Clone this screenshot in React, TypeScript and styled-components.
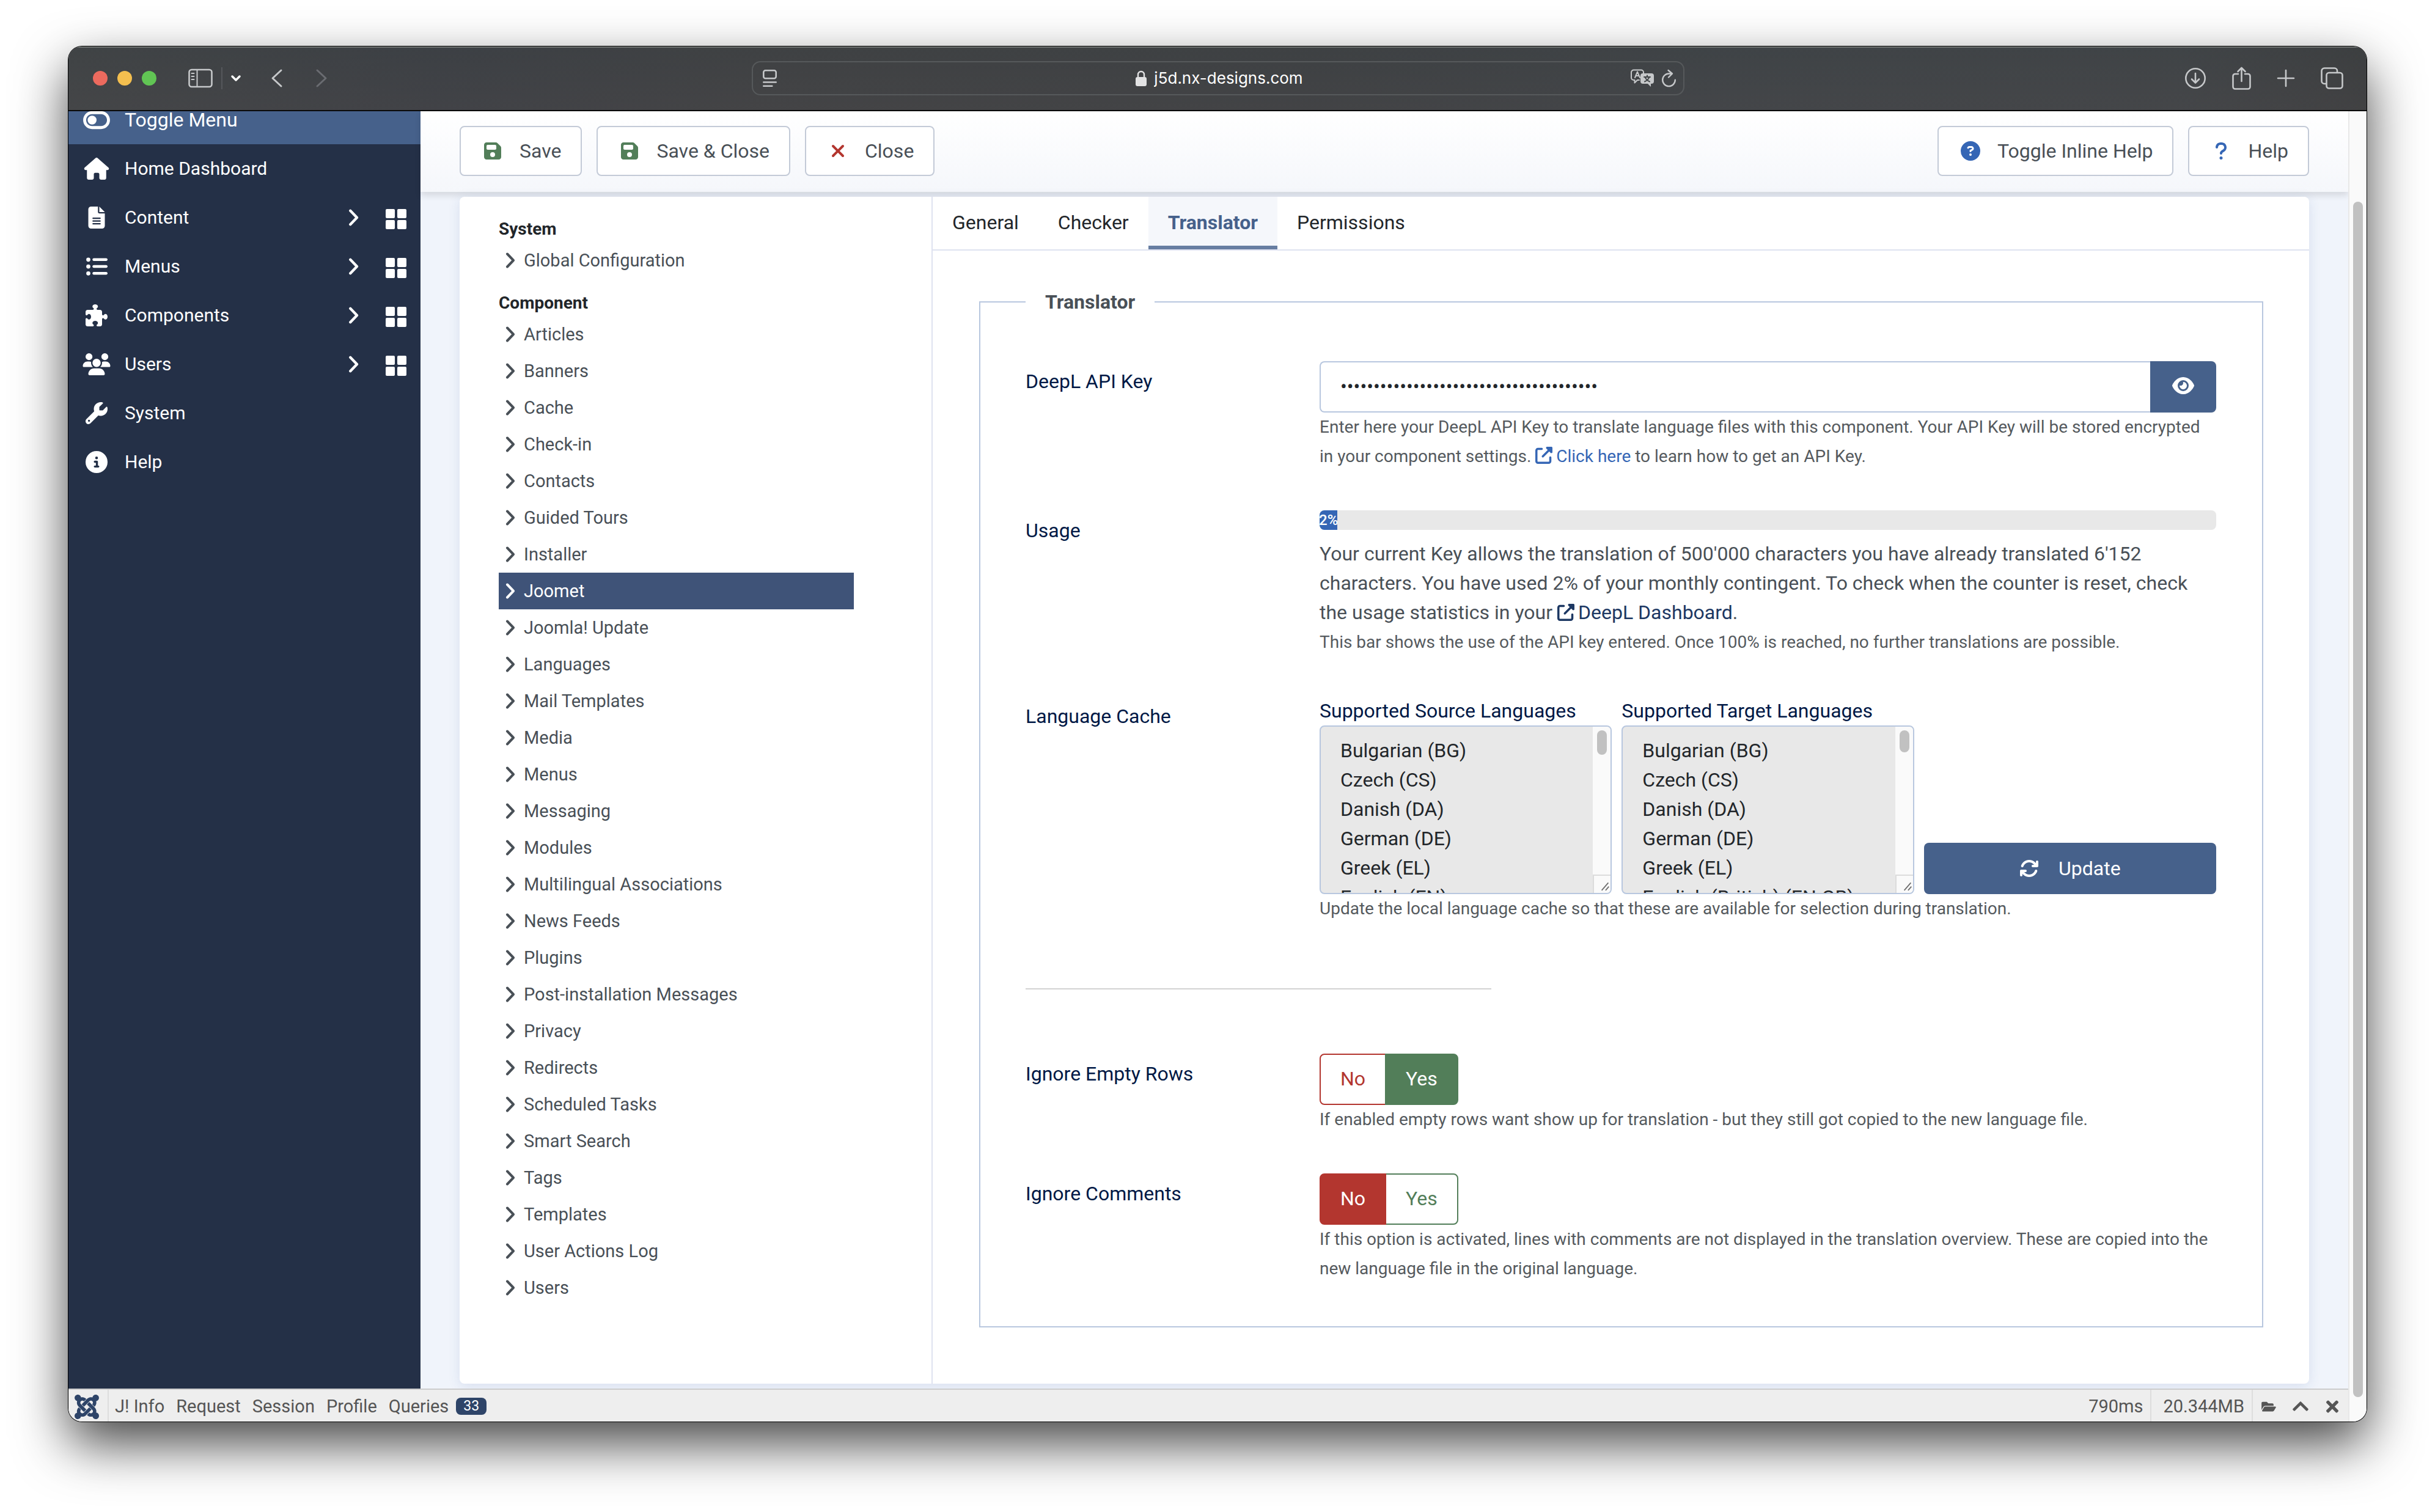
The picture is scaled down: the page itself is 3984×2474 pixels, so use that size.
import React, { useState } from 'react';
import styled, { createGlobalStyle, css } from 'styled-components';
import {
  FaToggleOff,
  FaHouse,
  FaFileLines,
  FaListUl,
  FaPuzzlePiece,
  FaUsers,
  FaWrench,
  FaCircleInfo,
  FaFloppyDisk,
  FaXmark,
  FaCircleQuestion,
  FaQuestion,
  FaEye,
  FaUpRightFromSquare,
  FaArrowsRotate,
} from 'react-icons/fa6';
import { FaFolderOpen, FaChevronUp, FaTimes, FaJoomla } from 'react-icons/fa';

const color = {
  navy: '#243047',
  blue: '#46618b',
  active: '#3f5378',
  link: '#3566b5',
  deep: '#001845',
  text: '#495057',
  ink: '#22262a',
  muted: '#555a5e',
  line: '#b8c7df',
  rule: '#dee2f0',
  page: '#f0f4fb',
  green: '#527e59',
  red: '#b3362f',
  badge: '#2e4468',
};

const GlobalStyle = createGlobalStyle`
  *, *::before, *::after { box-sizing: border-box; }
  body {
    margin: 0;
    background: #fff;
    color: ${color.text};
    font-family: Roboto, "Noto Sans", sans-serif;
    font-size: 32px;
    line-height: 48px;
  }
  button, input, select { font: inherit; color: inherit; margin: 0; }
  button { cursor: pointer; }
  a { text-decoration: none; color: inherit; }
  ul { list-style: none; margin: 0; padding: 0; }
`;

const Desktop = styled.div`
  min-height: 100vh;
  padding: 76px 112px 148px;
  display: flex;
  background: #fff;
`;

const Window = styled.div`
  flex: 1;
  min-width: 0;
  display: flex;
  flex-direction: column;
  border-radius: 22px;
  overflow: hidden;
  background: ${color.page};
  box-shadow: 0 0 0 1px #000, 0 36px 86px rgba(0, 0, 0, 0.73);
`;

/* ---------- browser chrome ---------- */

const TitleBar = styled.header`
  display: grid;
  grid-template-columns: 1fr minmax(0, 1526px) 1fr;
  align-items: center;
  height: 106px;
  padding: 0 38px 0 40px;
  border-bottom: 2px solid #0a0a0a;
  background: linear-gradient(180deg, rgba(62, 66, 68, 0.6), rgba(70, 70, 72, 0.6)),
    linear-gradient(90deg, #424547 0%, #3a3d45 16%, #404042 30%, #3d3f42 55%, #40454a 72%, #42464a 92%, #3a3a3b 100%);
  box-shadow: inset 0 2px 0 #707472;
  color: #c6c8ca;
`;

const ChromeGroup = styled.div<{ $gap: number; $end?: boolean }>`
  display: flex;
  align-items: center;
  gap: ${(p) => p.$gap}px;
  justify-content: ${(p) => (p.$end ? 'flex-end' : 'flex-start')};
`;

const Light = styled.button<{ $tint: string }>`
  width: 24px;
  height: 24px;
  padding: 0;
  border: 0;
  border-radius: 50%;
  background: ${(p) => p.$tint};
`;

const ChromeButton = styled.button<{ $dim?: boolean }>`
  display: flex;
  padding: 0;
  border: 0;
  background: none;
  color: ${(p) => (p.$dim ? '#6a6c71' : 'inherit')};
  svg {
    display: block;
    overflow: visible;
    fill: none;
    stroke: currentColor;
    stroke-width: 2.6;
    stroke-linecap: round;
    stroke-linejoin: round;
  }
`;

const ChromeDivider = styled.span`
  width: 2px;
  height: 36px;
  background: #55575b;
`;

const NavGroup = styled(ChromeGroup)`
  padding-left: 36px;
`;

const HistoryGroup = styled(ChromeGroup)`
  padding-left: 34px;
`;

const AddressBar = styled.div`
  display: grid;
  grid-template-columns: 1fr auto 1fr;
  align-items: center;
  height: 56px;
  padding: 0 12px 0 16px;
  border: 2px solid #56595b;
  border-radius: 14px;
`;

const AddressLabel = styled.label`
  display: flex;
  align-items: center;
  gap: 12px;
  color: #e2e2e3;
`;

const AddressInput = styled.input`
  field-sizing: content;
  padding: 0;
  border: 0;
  outline: 0;
  background: none;
  color: #fff;
  font-family: Inter, Roboto, sans-serif;
  font-size: 26px;
  line-height: 32px;
`;

/* ---------- page frame ---------- */

const Viewport = styled.div`
  flex: 1;
  min-height: 0;
  display: flex;
`;

const Page = styled.div`
  flex: 1;
  min-width: 0;
  display: flex;
  flex-direction: column;
`;

const PageBody = styled.div`
  flex: 1;
  display: flex;
`;

const ScrollTrack = styled.div`
  display: flex;
  width: 30px;
  padding: 148px 6px 40px;
  border-left: 2px solid #e8e8e8;
  background: #fafafa;
`;

const ScrollThumb = styled.div`
  flex: 1;
  border-radius: 8px;
  background: #c1c1c1;
`;

/* ---------- main menu ---------- */

const Sidebar = styled.nav`
  flex: none;
  width: 576px;
  overflow: hidden;
  background: ${color.navy};
  color: #fff;
`;

/* The menu is scrolled down by a third of its first row. */
const MenuList = styled.ul`
  margin-top: -26px;
`;

const MenuRow = styled.li<{ $toggle?: boolean }>`
  display: flex;
  align-items: center;
  height: 80px;
  padding: 0 23px 0 22px;
  background: ${(p) => (p.$toggle ? color.blue : 'transparent')};
  font-size: ${(p) => (p.$toggle ? 32 : 30)}px;
`;

const MenuLink = styled.a`
  flex: 1;
  display: flex;
  align-items: center;
  gap: 22px;
`;

const MenuIcon = styled.span<{ $size: number }>`
  display: flex;
  svg {
    display: block;
    width: 48px;
    height: ${(p) => p.$size}px;
  }
`;

const MenuAction = styled.button`
  display: flex;
  padding: 0;
  border: 0;
  background: none;
  & + & {
    margin-left: 44px;
  }
`;

/* ---------- toolbar ---------- */

const Main = styled.main`
  flex: 1;
  min-width: 0;
  display: flex;
  flex-direction: column;
`;

const Toolbar = styled.div`
  display: flex;
  justify-content: space-between;
  padding: 24px 64px 26px;
  background: linear-gradient(#fff, #f5f7fb);
  box-shadow: 0 6px 10px rgba(0, 0, 0, 0.11);
`;

const ToolGroup = styled.div`
  display: flex;
  gap: 24px;
`;

const ToolButton = styled.button<{ $tint: string }>`
  display: flex;
  align-items: center;
  gap: 24px;
  height: 82px;
  padding: 0 32px;
  border: 2px solid #c3cad7;
  border-radius: 8px;
  background: #fff;
  color: ${color.text};
  svg {
    width: 40px;
    height: 32px;
    color: ${(p) => p.$tint};
  }
`;

/* ---------- options card ---------- */

const Card = styled.section`
  flex: 1;
  display: flex;
  margin: 8px 64px;
  border-radius: 8px;
  background: #fff;
  box-shadow: 0 4px 20px rgba(40, 70, 150, 0.12);
`;

const Aside = styled.aside`
  flex: none;
  width: 774px;
  padding: 32px 127px 32px 64px;
  border-right: 2px solid ${color.rule};
`;

const AsideHeading = styled.h2`
  margin: 0;
  font-size: 28px;
  line-height: 42px;
  font-weight: 700;
  color: ${color.ink};
`;

const AsideList = styled.ul`
  margin-bottom: 19px;
`;

const AsideLink = styled.a<{ $active: boolean }>`
  display: flex;
  align-items: center;
  gap: 14px;
  height: 60px;
  padding-left: 11px;
  font-size: 29px;
  color: ${(p) => (p.$active ? '#fff' : color.text)};
  background: ${(p) => (p.$active ? color.active : 'transparent')};
`;

const Panel = styled.div`
  flex: 1;
  min-width: 0;
`;

const TabBar = styled.div`
  display: flex;
  border-bottom: 2px solid ${color.rule};
`;

const Tab = styled.button<{ $active: boolean }>`
  height: 86px;
  padding: 4px 32px 0;
  border: 0;
  border-bottom: 6px solid ${(p) => (p.$active ? '#677ea2' : 'transparent')};
  background: ${(p) => (p.$active ? '#f5f7fb' : 'transparent')};
  color: ${(p) => (p.$active ? color.blue : color.ink)};
  font-weight: ${(p) => (p.$active ? 700 : 400)};
`;

const TabBody = styled.div`
  padding: 60px 75px 60px 76px;
`;

const Fieldset = styled.fieldset`
  display: block;
  min-width: 0;
  margin: 0;
  padding: 73px 75px 70px 74px;
  border: 2px solid ${color.line};
`;

const Legend = styled.legend`
  padding: 0 32px;
  font-weight: 700;
`;

const Fields = styled.div`
  display: flex;
  flex-direction: column;
  gap: 64px;
`;

const FieldRow = styled.div`
  display: grid;
  grid-template-columns: 481px minmax(0, 1fr);
`;

const labelText = css`
  color: ${color.deep};
`;

const FieldLabel = styled.label`
  ${labelText}
  padding-top: 9px;
`;

const FieldTitle = styled.span`
  ${labelText}
  padding-top: 9px;
`;

const Hint = styled.p`
  margin: 0;
  font-size: 28px;
  color: ${color.muted};
`;

const TextLink = styled.a<{ $dark?: boolean }>`
  color: ${(p) => (p.$dark ? '#1d3863' : color.link)};
  svg {
    width: 28px;
    height: 28px;
    margin-right: 6px;
    vertical-align: -3px;
  }
`;

const KeyGroup = styled.div`
  display: flex;
  height: 84px;
`;

const KeyInput = styled.input`
  flex: 1;
  min-width: 0;
  padding: 0 32px 3px;
  border: 2px solid ${color.line};
  border-right: 0;
  border-radius: 8px 0 0 8px;
  outline: 0;
  background: #fff;
  color: ${color.ink};
`;

const EyeButton = styled.button`
  display: flex;
  align-items: center;
  justify-content: center;
  width: 108px;
  padding: 0 0 4px;
  border: 0;
  border-radius: 0 8px 8px 0;
  background: ${color.blue};
  color: #fff;
  svg {
    width: 36px;
    height: 32px;
  }
`;

const Progress = styled.div`
  display: flex;
  height: 32px;
  margin-bottom: 15px;
  overflow: hidden;
  border-radius: 8px;
  background: #e8e8e8;
`;

const ProgressFill = styled.div`
  display: flex;
  align-items: center;
  justify-content: center;
  overflow: hidden;
  background: ${color.link};
  color: #fff;
  font-size: 24px;
  font-weight: 500;
  line-height: 32px;
`;

const Paragraph = styled.p`
  margin: 0 0 1px;
`;

const LanguageGrid = styled.div`
  display: grid;
  grid-template-columns: repeat(3, minmax(0, 1fr));
  gap: 16px;
  align-items: end;
`;

const ListLabel = styled.label`
  ${labelText}
  display: block;
`;

const ListFrame = styled.div`
  display: flex;
  height: 276px;
  border: 2px solid ${color.line};
  border-radius: 8px;
  overflow: hidden;
  background: #e8e8e8;
`;

const LanguageSelect = styled.select`
  flex: 1;
  min-width: 0;
  height: 272px;
  padding: 20px 0 0;
  border: 0;
  outline: 0;
  border-radius: 0;
  background: transparent;
  color: ${color.ink};
  overflow-y: scroll;
  scrollbar-width: none;
  option {
    height: 48px;
    min-height: 48px;
    padding: 0 32px;
    line-height: 48px;
  }
`;

const ListTrack = styled.div`
  flex: none;
  display: flex;
  flex-direction: column;
  justify-content: space-between;
  width: 29px;
  background: #fafafa;
`;

const ListThumb = styled.div<{ $length: number }>`
  width: 16px;
  height: ${(p) => p.$length}px;
  margin: 6px 7px;
  border-radius: 8px;
  background: #c1c1c1;
`;

const ResizeGrip = styled.svg`
  display: block;
  width: 29px;
  height: 30px;
  border-top: 2px solid #dcdcdc;
  border-left: 2px solid #dcdcdc;
  fill: none;
  stroke: #6f6f6f;
  stroke-width: 2;
`;

const UpdateButton = styled.button`
  display: flex;
  align-items: center;
  justify-content: center;
  gap: 32px;
  height: 84px;
  border: 0;
  border-radius: 8px;
  background: ${color.blue};
  color: #fff;
  svg {
    width: 32px;
    height: 32px;
  }
`;

const Rule = styled.hr`
  width: 762px;
  height: 2px;
  margin: 42px 0 41px;
  border: 0;
  background: #d3d3d3;
`;

const SwitchGroup = styled.div`
  display: flex;
`;

const SwitchOption = styled.label<{ $tint: string }>`
  position: relative;
  display: flex;
  align-items: center;
  height: 84px;
  padding: 0 32px 2px;
  border: 2px solid ${(p) => p.$tint};
  background: #fff;
  color: ${(p) => p.$tint};
  cursor: pointer;
  &:first-child {
    border-radius: 8px 0 0 8px;
  }
  &:last-child {
    margin-left: -2px;
    border-radius: 0 8px 8px 0;
  }
  &:has(input:checked) {
    z-index: 1;
    background: ${(p) => p.$tint};
    color: #fff;
  }
  input {
    position: absolute;
    inset: 0;
    opacity: 0;
  }
`;

/* ---------- debug bar ---------- */

const DebugBar = styled.footer`
  display: flex;
  justify-content: space-between;
  height: 54px;
  border-top: 2px solid #ccc;
  background: #eee;
  color: #555;
  font-size: 29px;
`;

const DebugGroup = styled.div`
  display: flex;
`;

const DebugLogo = styled.a`
  display: flex;
  align-items: center;
  width: 66px;
  padding: 4px 0 0 10px;
  border-right: 2px solid #ddd;
  color: ${color.badge};
  svg {
    width: 40px;
    height: 46px;
  }
`;

const DebugLink = styled.a`
  display: flex;
  align-items: center;
  gap: 12px;
  padding: 2px 0 0 10px;
  margin-right: 9px;
`;

const Badge = styled.span`
  padding: 0 12px;
  border-radius: 8px;
  background: ${color.badge};
  color: #fff;
  font-size: 23px;
  line-height: 28px;
`;

const DebugStat = styled.span`
  display: flex;
  align-items: center;
  padding: 2px 12px 0 19px;
  border-right: 2px solid #ddd;
`;

const DebugButton = styled.button<{ $size: number }>`
  display: flex;
  align-items: center;
  justify-content: center;
  width: 52px;
  padding: 2px 0 0;
  border: 0;
  background: none;
  svg {
    width: 30px;
    height: ${(p) => p.$size}px;
  }
`;

/* ---------- data ---------- */

const menu = [
  { label: 'Home Dashboard', icon: FaHouse },
  { label: 'Content', icon: FaFileLines, nested: true },
  { label: 'Menus', icon: FaListUl, nested: true },
  { label: 'Components', icon: FaPuzzlePiece, nested: true },
  { label: 'Users', icon: FaUsers, nested: true },
  { label: 'System', icon: FaWrench },
  { label: 'Help', icon: FaCircleInfo },
];

const components = [
  'Articles', 'Banners', 'Cache', 'Check-in', 'Contacts', 'Guided Tours', 'Installer', 'Joomet',
  'Joomla! Update', 'Languages', 'Mail Templates', 'Media', 'Menus', 'Messaging', 'Modules',
  'Multilingual Associations', 'News Feeds', 'Plugins', 'Post-installation Messages', 'Privacy',
  'Redirects', 'Scheduled Tasks', 'Smart Search', 'Tags', 'Templates', 'User Actions Log', 'Users',
];

const tabs = ['General', 'Checker', 'Translator', 'Permissions'];

const commonLanguages = ['Bulgarian (BG)', 'Czech (CS)', 'Danish (DA)', 'German (DE)', 'Greek (EL)'];

const USED_PERCENT = 2;

/* ---------- parts ---------- */

function Chevron({ height }: { height: number }) {
  return (
    <svg
      width={(height * 16) / 26}
      height={height}
      viewBox="0 0 16 26"
      fill="none"
      stroke="currentColor"
      strokeWidth="4"
      strokeLinecap="round"
      strokeLinejoin="round"
      aria-hidden="true"
    >
      <path d="M3 2.500L13 13 3 23.500" />
    </svg>
  );
}

function DashboardGlyph() {
  return (
    <svg width="34" height="38" viewBox="0 0 34 38" fill="currentColor" aria-hidden="true">
      <rect x="0" y="5" width="15" height="15" rx="2" />
      <rect x="19" y="5" width="15" height="15" rx="2" />
      <rect x="0" y="23" width="15" height="15" rx="2" />
      <rect x="19" y="23" width="15" height="15" rx="2" />
    </svg>
  );
}

function BrowserBar() {
  return (
    <TitleBar>
      <ChromeGroup $gap={16}>
        <Light $tint="#ec6a5e" aria-label="Close window" />
        <Light $tint="#f4bf4f" aria-label="Minimise window" />
        <Light $tint="#61c554" aria-label="Zoom window" />
        <NavGroup $gap={14}>
          <ChromeButton aria-label="Show sidebar">
            <svg width="40" height="28" viewBox="0 0 40 28">
              <rect x="1.500" y="0" width="37" height="28" rx="4" />
              <path d="M14.500 0v28M5.500 6h4M5.500 11h4M5.500 16h4" strokeWidth="2" />
            </svg>
          </ChromeButton>
          <ChromeDivider />
          <ChromeButton aria-label="Tab groups">
            <svg width="16" height="10" viewBox="0 0 16 10">
              <path d="M2 2l6 6 6-6" stroke="#fff" strokeWidth="3.500" />
            </svg>
          </ChromeButton>
        </NavGroup>
        <HistoryGroup $gap={55}>
          <ChromeButton aria-label="Back">
            <svg width="18" height="28" viewBox="0 0 18 28">
              <path d="M16 1L2 14l14 13" strokeWidth="3" />
            </svg>
          </ChromeButton>
          <ChromeButton aria-label="Forward" $dim>
            <svg width="18" height="28" viewBox="0 0 18 28">
              <path d="M2 1l14 13L2 27" strokeWidth="3" />
            </svg>
          </ChromeButton>
        </HistoryGroup>
      </ChromeGroup>

      <AddressBar>
        <ChromeGroup $gap={0}>
          <ChromeButton aria-label="Page settings">
            <svg width="23" height="28" viewBox="0 0 23 28">
              <rect x="1.300" y="1.300" width="20.400" height="13" rx="3" />
              <path d="M1.300 20.500h20.400M1.300 26.700h14" />
            </svg>
          </ChromeButton>
        </ChromeGroup>
        <AddressLabel>
          <svg width="18" height="26" viewBox="0 0 18 26" aria-hidden="true">
            <rect x="0" y="11" width="18" height="15" rx="3" fill="currentColor" />
            <path d="M4 12V7a5 5 0 0 1 10 0v5" fill="none" stroke="currentColor" strokeWidth="2.400" />
          </svg>
          <AddressInput aria-label="Address" defaultValue="j5d.nx-designs.com" />
        </AddressLabel>
        <ChromeGroup $gap={13} $end>
          <ChromeButton aria-label="Translate page">
            <svg width="38" height="28" viewBox="0 0 38 28">
              <path d="M14 17h-3l-4.500 4.500V17H5a4 4 0 0 1-4-4V4.500a4 4 0 0 1 4-4h12a4 4 0 0 1 4 4V6" strokeWidth="2" />
              <path d="M7 13l4-9.500L15 13M8.500 10h5" strokeWidth="2" />
              <path d="M20 6h14a4 4 0 0 1 4 4v9a4 4 0 0 1-4 4h-1v5l-5-5h-8a4 4 0 0 1-4-4v-9a4 4 0 0 1 4-4z" fill="currentColor" stroke="none" />
              <path d="M22 12h10M27 9.500V12M30.500 12c-1.500 4-4 6-7.500 7.500M23.500 12c1.500 4 4 6 7.500 7.500" stroke="#3f4346" strokeWidth="2" />
            </svg>
          </ChromeButton>
          <ChromeButton aria-label="Reload">
            <svg width="23" height="28" viewBox="0 0 23 28">
              <path d="M16 6.500h-4.500a10.300 10.300 0 1 0 10.300 10.300M10.500 1l6.500 5.500-6 6" strokeWidth="2.400" />
            </svg>
          </ChromeButton>
        </ChromeGroup>
      </AddressBar>

      <ChromeGroup $gap={43} $end>
        <ChromeButton aria-label="Downloads">
          <svg width="34" height="34" viewBox="0 0 34 34">
            <circle cx="17" cy="17" r="15.700" />
            <path d="M17 9v15M11 18.500l6 6 6-6" />
          </svg>
        </ChromeButton>
        <ChromeButton aria-label="Share">
          <svg width="31" height="38" viewBox="0 0 31 38">
            <path d="M10 12H5a3.500 3.500 0 0 0-3.500 3.500V33A3.500 3.500 0 0 0 5 36.500h21a3.500 3.500 0 0 0 3.500-3.500V15.500A3.500 3.500 0 0 0 26 12h-5M15.500 24V2M9.500 8l6-6 6 6" />
          </svg>
        </ChromeButton>
        <ChromeButton aria-label="New tab">
          <svg width="28" height="26" viewBox="0 0 28 26">
            <path d="M14 0v26M1 13h26" />
          </svg>
        </ChromeButton>
        <ChromeButton aria-label="Tab overview">
          <svg width="37" height="36" viewBox="0 0 37 36">
            <rect x="9.500" y="9" width="26" height="25.500" rx="4" />
            <path d="M9 27H6a4.500 4.500 0 0 1-4.500-4.500V6A4.500 4.500 0 0 1 6 1.500h16.500A4.500 4.500 0 0 1 27 6v2.500" />
          </svg>
        </ChromeButton>
      </ChromeGroup>
    </TitleBar>
  );
}

function LanguageList(props: { id: string; label: string; last: string; thumb: number }) {
  return (
    <div>
      <ListLabel htmlFor={props.id}>{props.label}</ListLabel>
      <ListFrame>
        <LanguageSelect id={props.id} multiple>
          {[...commonLanguages, props.last].map((name) => (
            <option key={name}>{name}</option>
          ))}
        </LanguageSelect>
        <ListTrack>
          <ListThumb $length={props.thumb} />
          <ResizeGrip viewBox="0 0 30 28" aria-hidden="true">
            <path d="M14 25L26 11M21 25l6-7" />
          </ResizeGrip>
        </ListTrack>
      </ListFrame>
    </div>
  );
}

function YesNo(props: { name: string; title: string; initial: 'no' | 'yes'; children: React.ReactNode }) {
  const [value, setValue] = useState(props.initial);
  return (
    <FieldRow role="radiogroup" aria-labelledby={`${props.name}-title`}>
      <FieldTitle id={`${props.name}-title`}>{props.title}</FieldTitle>
      <div>
        <SwitchGroup>
          <SwitchOption $tint={color.red}>
            <input type="radio" name={props.name} checked={value === 'no'} onChange={() => setValue('no')} />
            No
          </SwitchOption>
          <SwitchOption $tint={color.green}>
            <input type="radio" name={props.name} checked={value === 'yes'} onChange={() => setValue('yes')} />
            Yes
          </SwitchOption>
        </SwitchGroup>
        <Hint>{props.children}</Hint>
      </div>
    </FieldRow>
  );
}

export default function App() {
  const [tab, setTab] = useState('Translator');
  const [reveal, setReveal] = useState(false);

  return (
    <>
      <GlobalStyle />
      <Desktop>
        <Window>
          <BrowserBar />
          <Viewport>
            <Page>
              <PageBody>
                <Sidebar aria-label="Main menu">
                  <MenuList>
                    <MenuRow $toggle>
                      <MenuLink href="#toggle">
                        <MenuIcon $size={39}><FaToggleOff /></MenuIcon>
                        Toggle Menu
                      </MenuLink>
                    </MenuRow>
                    {menu.map(({ label, icon: Icon, nested }) => (
                      <MenuRow key={label}>
                        <MenuLink href={`#${label}`}>
                          <MenuIcon $size={36}><Icon /></MenuIcon>
                          {label}
                        </MenuLink>
                        {nested && (
                          <>
                            <MenuAction aria-label={`Expand ${label}`}><Chevron height={28} /></MenuAction>
                            <MenuAction aria-label={`${label} dashboard`}><DashboardGlyph /></MenuAction>
                          </>
                        )}
                      </MenuRow>
                    ))}
                  </MenuList>
                </Sidebar>

                <Main>
                  <Toolbar>
                    <ToolGroup>
                      <ToolButton $tint={color.green}><FaFloppyDisk />Save</ToolButton>
                      <ToolButton $tint={color.green}><FaFloppyDisk />Save &amp; Close</ToolButton>
                      <ToolButton $tint={color.red}><FaXmark />Close</ToolButton>
                    </ToolGroup>
                    <ToolGroup>
                      <ToolButton $tint={color.link}><FaCircleQuestion />Toggle Inline Help</ToolButton>
                      <ToolButton $tint={color.link}><FaQuestion />Help</ToolButton>
                    </ToolGroup>
                  </Toolbar>

                  <Card>
                    <Aside>
                      <AsideHeading>System</AsideHeading>
                      <AsideList>
                        <li>
                          <AsideLink href="#global" $active={false}><Chevron height={26} />Global Configuration</AsideLink>
                        </li>
                      </AsideList>
                      <AsideHeading>Component</AsideHeading>
                      <AsideList>
                        {components.map((name) => (
                          <li key={name}>
                            <AsideLink href={`#${name}`} $active={name === 'Joomet'}><Chevron height={26} />{name}</AsideLink>
                          </li>
                        ))}
                      </AsideList>
                    </Aside>

                    <Panel>
                      <TabBar role="tablist">
                        {tabs.map((name) => (
                          <Tab key={name} role="tab" aria-selected={tab === name} $active={tab === name} onClick={() => setTab(name)}>
                            {name}
                          </Tab>
                        ))}
                      </TabBar>
                      <TabBody role="tabpanel">
                        <Fieldset>
                          <Legend>Translator</Legend>
                          <Fields>
                            <FieldRow>
                              <FieldLabel htmlFor="api-key">DeepL API Key</FieldLabel>
                              <div>
                                <KeyGroup>
                                  <KeyInput id="api-key" type={reveal ? 'text' : 'password'} defaultValue={'x'.repeat(39)} />
                                  <EyeButton aria-label="Show key" onClick={() => setReveal(!reveal)}><FaEye /></EyeButton>
                                </KeyGroup>
                                <Hint>
                                  Enter here your DeepL API Key to translate language files with this component. Your API Key will be
                                  stored encrypted in your component settings.{' '}
                                  <TextLink href="#key"><FaUpRightFromSquare />Click here</TextLink> to learn how to get an API Key.
                                </Hint>
                              </div>
                            </FieldRow>

                            <FieldRow>
                              <FieldTitle id="usage-title">Usage</FieldTitle>
                              <div>
                                <Progress role="progressbar" aria-labelledby="usage-title" aria-valuenow={USED_PERCENT}>
                                  <ProgressFill style={{ width: `${USED_PERCENT}%` }}>{USED_PERCENT}%</ProgressFill>
                                </Progress>
                                <Paragraph>
                                  Your current Key allows the translation of 500'000 characters you have already translated 6'152
                                  characters. You have used {USED_PERCENT}% of your monthly contingent. To check when the counter is
                                  reset, check the usage statistics in your{' '}
                                  <TextLink href="#deepl" $dark><FaUpRightFromSquare />DeepL Dashboard</TextLink>.
                                </Paragraph>
                                <Hint>
                                  This bar shows the use of the API key entered. Once 100% is reached, no further translations are
                                  possible.
                                </Hint>
                              </div>
                            </FieldRow>

                            <FieldRow>
                              <FieldTitle>Language Cache</FieldTitle>
                              <div>
                                <LanguageGrid>
                                  <LanguageList id="source" label="Supported Source Languages" last="English (EN)" thumb={40} />
                                  <LanguageList id="target" label="Supported Target Languages" last="English (British) (EN-GB)" thumb={36} />
                                  <UpdateButton><FaArrowsRotate />Update</UpdateButton>
                                </LanguageGrid>
                                <Hint>Update the local language cache so that these are available for selection during translation.</Hint>
                              </div>
                            </FieldRow>

                            <Rule />

                            <YesNo name="ignore-empty" title="Ignore Empty Rows" initial="yes">
                              If enabled empty rows want show up for translation - but they still got copied to the new language file.
                            </YesNo>
                            <YesNo name="ignore-comments" title="Ignore Comments" initial="no">
                              If this option is activated, lines with comments are not displayed in the translation overview. These are
                              copied into the new language file in the original language.
                            </YesNo>
                          </Fields>
                        </Fieldset>
                      </TabBody>
                    </Panel>
                  </Card>
                </Main>
              </PageBody>

              <DebugBar>
                <DebugGroup>
                  <DebugLogo href="#debug" aria-label="Joomla"><FaJoomla /></DebugLogo>
                  <DebugLink href="#info">J! Info</DebugLink>
                  <DebugLink href="#request">Request</DebugLink>
                  <DebugLink href="#session">Session</DebugLink>
                  <DebugLink href="#profile">Profile</DebugLink>
                  <DebugLink href="#queries">Queries<Badge>33</Badge></DebugLink>
                </DebugGroup>
                <DebugGroup>
                  <DebugStat>790ms</DebugStat>
                  <DebugStat>20.344MB</DebugStat>
                  <DebugButton $size={21} aria-label="Open"><FaFolderOpen /></DebugButton>
                  <DebugButton $size={30} aria-label="Minimise"><FaChevronUp /></DebugButton>
                  <DebugButton $size={29} aria-label="Close"><FaTimes /></DebugButton>
                </DebugGroup>
              </DebugBar>
            </Page>
            <ScrollTrack><ScrollThumb /></ScrollTrack>
          </Viewport>
        </Window>
      </Desktop>
    </>
  );
}
